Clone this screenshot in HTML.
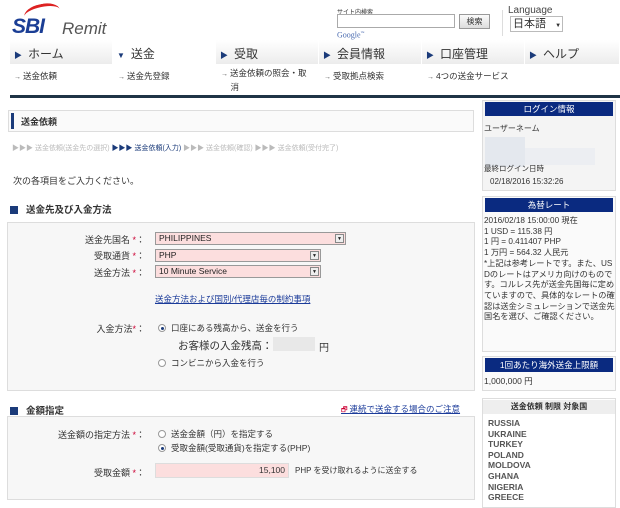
<!DOCTYPE html>
<html><head><meta charset="utf-8"><style>
*{margin:0;padding:0;box-sizing:border-box}
body{width:620px;height:503px;overflow:hidden;background:#fff;font-family:"Liberation Sans","Noto Sans CJK JP",sans-serif;font-size:9px;color:#333;position:relative}
.a{position:absolute;white-space:nowrap}
.nav{position:absolute;top:40px;height:24px;width:103px;border-right:1px solid #fff;background:linear-gradient(#fff,#ececec);font-size:12px;color:#333;padding:5px 0 0 4px}
.nav b{font-size:8px;color:#1b3b7a;margin-right:6px}
.sub{position:absolute;top:70px;font-size:8.5px;color:#333}
.sub:before{content:"→ ";color:#555;font-size:7px}
.box{position:absolute;border:1px solid #ddd;background:#f7f7f7}
.hd{position:absolute;background:#0a2a80;color:#fff;text-align:center;font-size:8.5px;height:14px;line-height:14px}
.sel{position:absolute;background:#fcdede;border:1px solid #999;font-size:8.5px;color:#222;padding-left:3px;line-height:11px}
.sel i{position:absolute;right:1px;top:1px;width:9px;height:9px;border:1px solid #888;background:#eee;font-style:normal;font-size:5px;text-align:center;line-height:8px}
.lb{position:absolute;text-align:right;width:140px;font-size:9px;left:5px}
.lb span{color:#c03;}
.rad{display:inline-block;width:8px;height:8px;border-radius:50%;border:1px solid #999;background:#fff;vertical-align:-1px;margin-right:5px;position:relative}
.rad.on:after{content:"";position:absolute;left:1.5px;top:1.5px;width:3px;height:3px;border-radius:50%;background:#1b3b7a}
.sq{display:inline-block;width:8px;height:8px;background:#1b3b7a;margin-right:8px;vertical-align:-1px}
.rb{position:absolute;left:482px;width:134px;border:1px solid #ddd;background:#f4f4f4}
</style></head><body>
<div class="a" style="left:24px;top:4px;width:36px;height:18px;border-top:3px solid #d22;border-radius:50% 50% 0 0;transform:rotate(-12deg)"></div>
<div class="a" style="left:12px;top:15px;font-size:21px;font-weight:bold;font-style:italic;color:#1b3e95;letter-spacing:-1px">SBI</div>
<div class="a" style="left:62px;top:19px;font-size:17px;font-style:italic;color:#555">Remit</div>
<div class="a" style="left:337px;top:7px;font-size:6px">サイト内検索</div>
<div class="a" style="left:337px;top:14px;width:118px;height:14px;border:1px solid #aaa;background:#fff"></div>
<div class="a" style="left:459px;top:14px;width:31px;height:15px;border:1px solid #999;background:linear-gradient(#fafafa,#ddd);font-size:8px;text-align:center;line-height:13px">検索</div>
<div class="a" style="left:337px;top:30px;font-size:8px;color:#4a6bb0;font-family:'Liberation Serif',serif">Google<sup style="font-size:4px">™</sup></div>
<div class="a" style="left:502px;top:10px;width:1px;height:26px;background:#ddd"></div>
<div class="a" style="left:508px;top:5px;font-size:10px;color:#444">Language</div>
<div class="a" style="left:510px;top:16px;width:53px;height:16px;border:1px solid #bbb;background:#fff;font-size:11px;padding-left:2px;line-height:14px">日本語 <span style="font-size:6px;margin-left:6px">▼</span></div>
<div class="a" style="left:10px;top:40px;width:610px;height:24px;background:#ececec"></div>
<div class="nav" style="left:10px"><b>▶</b>ホーム</div>
<div class="nav" style="left:113px;background:#fff"><b>▼</b>送金</div>
<div class="nav" style="left:216px"><b>▶</b>受取</div>
<div class="nav" style="left:319px"><b>▶</b>会員情報</div>
<div class="nav" style="left:422px"><b>▶</b>口座管理</div>
<div class="nav" style="left:525px;width:95px"><b>▶</b>ヘルプ</div>
<div class="sub" style="left:14px">送金依頼</div>
<div class="sub" style="left:118px">送金先登録</div>
<div class="sub" style="left:221px;line-height:12px;top:67px">送金依頼の照会・取<br>&nbsp;&nbsp;&nbsp;&nbsp;消</div>
<div class="sub" style="left:324px">受取拠点検索</div>
<div class="sub" style="left:427px">4つの送金サービス</div>
<div class="a" style="left:10px;top:95px;width:610px;height:3px;background:#1f3446"></div>

<div class="a" style="left:8px;top:110px;width:466px;height:22px;border:1px solid #ddd;background:#fafafa"></div>
<div class="a" style="left:11px;top:113px;width:3px;height:16px;background:#1b3b7a"></div>
<div class="a" style="left:21px;top:115px;font-size:9px;font-weight:bold">送金依頼</div>
<div class="a" style="left:12px;top:143px;font-size:7px;color:#bbb">▶▶▶ 送金依頼(送金先の選択) <span style="color:#1b3b7a">▶▶▶ 送金依頼(入力)</span> ▶▶▶ 送金依頼(確認) ▶▶▶ 送金依頼(受付完了)</div>
<div class="a" style="left:13px;top:174px;font-size:9px">次の各項目をご入力ください。</div>
<div class="a" style="left:10px;top:202px;font-size:9.5px;font-weight:bold"><span class="sq"></span>送金先及び入金方法</div>
<div class="box" style="left:7px;top:222px;width:468px;height:169px"></div>
<div class="lb" style="top:233px">送金先国名 <span>*</span>：</div>
<div class="sel" style="left:155px;top:232px;width:191px;height:13px">PHILIPPINES<i>▼</i></div>
<div class="lb" style="top:249px">受取通貨 <span>*</span>：</div>
<div class="sel" style="left:155px;top:249px;width:166px;height:13px">PHP<i>▼</i></div>
<div class="lb" style="top:266px">送金方法 <span>*</span>：</div>
<div class="sel" style="left:155px;top:265px;width:166px;height:13px">10 Minute Service<i>▼</i></div>
<div class="a" style="left:155px;top:293px;font-size:8.5px;color:#1b3b9a;text-decoration:underline">送金方法および国別/代理店毎の制約事項</div>
<div class="lb" style="top:322px">入金方法<span>*</span>：</div>
<div class="a" style="left:158px;top:322px;font-size:8.5px"><span class="rad on"></span>口座にある残高から、送金を行う</div>
<div class="a" style="left:178px;top:338px;font-size:10.5px">お客様の入金残高：</div>
<div class="a" style="left:273px;top:337px;width:42px;height:14px;background:#e8e8e8"></div>
<div class="a" style="left:319px;top:339px;font-size:10px">円</div>
<div class="a" style="left:158px;top:357px;font-size:8.5px"><span class="rad"></span>コンビニから入金を行う</div>
<div class="a" style="left:10px;top:403px;font-size:9.5px;font-weight:bold"><span class="sq"></span>金額指定</div>
<div class="a" style="left:341px;top:403px;font-size:8.5px;color:#1b3b9a;text-decoration:underline"><span style="color:#c03;text-decoration:none;font-size:7px">🗗 </span>連続で送金する場合のご注意</div>
<div class="box" style="left:7px;top:416px;width:468px;height:84px"></div>
<div class="lb" style="top:428px">送金額の指定方法 <span>*</span>：</div>
<div class="a" style="left:158px;top:428px;font-size:8.5px"><span class="rad"></span>送金金額（円）を指定する</div>
<div class="a" style="left:158px;top:442px;font-size:8.5px"><span class="rad on"></span>受取金額(受取通貨)を指定する(PHP)</div>
<div class="lb" style="top:466px">受取金額 <span>*</span>：</div>
<div class="a" style="left:155px;top:463px;width:134px;height:15px;background:#fcdede;border:1px solid #ddd;text-align:right;padding-right:3px;font-size:8.5px;line-height:13px">15,100</div>
<div class="a" style="left:295px;top:465px;font-size:8px">PHP を受け取れるように送金する</div>

<div class="rb" style="top:100px;height:91px"></div>
<div class="hd" style="left:485px;top:102px;width:128px">ログイン情報</div>
<div class="a" style="left:484px;top:123px;font-size:8px">ユーザーネーム</div>
<div class="a" style="left:485px;top:137px;width:40px;height:30px;background:#e4e8ee"></div>
<div class="a" style="left:525px;top:148px;width:70px;height:17px;background:#eceef2"></div>
<div class="a" style="left:484px;top:163px;font-size:7.5px">最終ログイン日時</div>
<div class="a" style="left:490px;top:177px;font-size:8px">02/18/2016 15:32:26</div>
<div class="rb" style="top:196px;height:156px;background:#fafafa"></div>
<div class="hd" style="left:485px;top:198px;width:128px">為替レート</div>
<div class="a" style="left:484px;top:216px;font-size:8.2px;line-height:10.7px;white-space:normal;width:131px;word-break:break-all">2016/02/18 15:00:00 現在<br>1 USD = 115.38 円<br>1 円 = 0.411407 PHP<br>1 万円 = 564.32 人民元<br>*上記は参考レートです。また、USDのレートはアメリカ向けのものです。コルレス先が送金先国毎に定めていますので、具体的なレートの確認は送金シミュレーションで送金先国名を選び、ご確認ください。</div>
<div class="rb" style="top:356px;height:35px;background:#fafafa"></div>
<div class="hd" style="left:485px;top:358px;width:128px">1回あたり海外送金上限額</div>
<div class="a" style="left:484px;top:375px;font-size:8.5px">1,000,000 円</div>
<div class="rb" style="top:398px;height:110px;background:#fff"></div>
<div class="a" style="left:483px;top:400px;width:132px;height:14px;background:#eee;font-size:8px;font-weight:bold;text-align:center;line-height:14px">送金依頼 制限 対象国</div>
<div class="a" style="left:488px;top:418px;font-size:8.5px;font-weight:bold;color:#555;line-height:10.6px">RUSSIA<br>UKRAINE<br>TURKEY<br>POLAND<br>MOLDOVA<br>GHANA<br>NIGERIA<br>GREECE</div>
</body></html>
